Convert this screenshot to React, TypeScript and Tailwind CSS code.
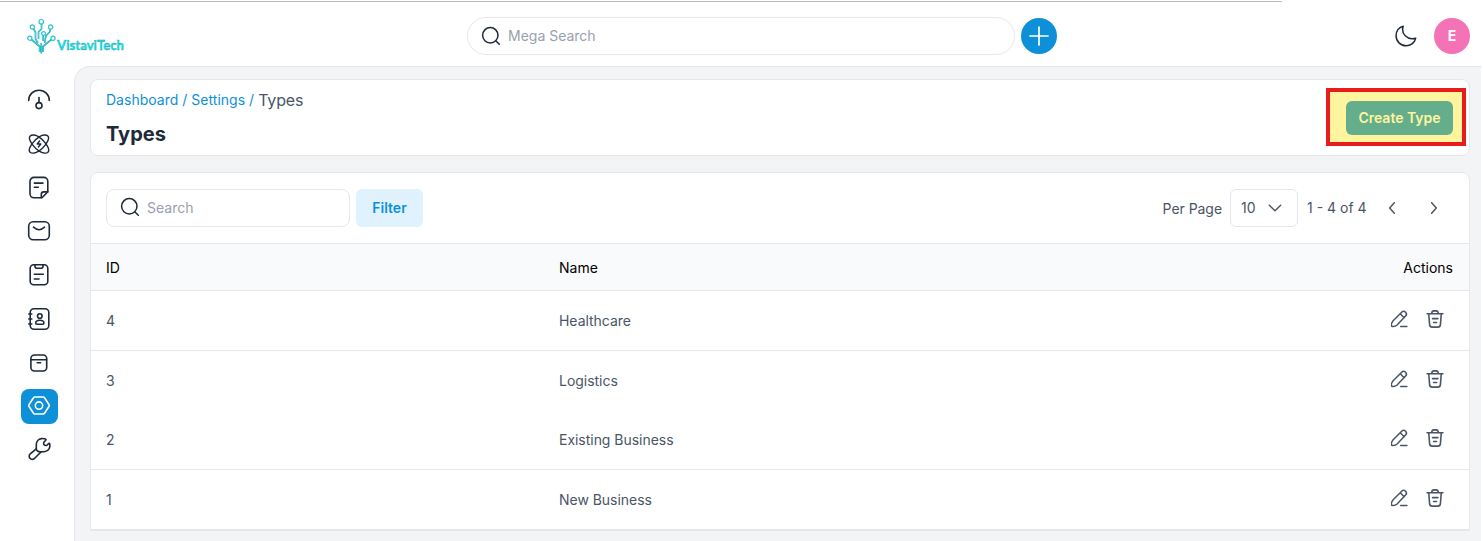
import React from "react";

type IconProps = { className?: string; children: React.ReactNode; box?: string; sw?: number };

function Icon({ className = "size-6", children, box = "0 0 24 24", sw = 1.6 }: IconProps) {
  return (
    <svg
      viewBox={box}
      className={`shrink-0 ${className}`}
      fill="none"
      stroke="currentColor"
      strokeWidth={sw}
      strokeLinecap="round"
      strokeLinejoin="round"
    >
      {children}
    </svg>
  );
}

const sidebar: { name: string; active?: boolean; art: React.ReactNode }[] = [
  {
    name: "dashboard",
    art: (
      <>
        <path d="M1.700 12.500C1.700 6.500 6.300 2.300 12 2.300s10.300 4.200 10.300 10.200" />
        <path d="M12 9.500v5" />
        <circle cx="12" cy="17.600" r="3" />
      </>
    ),
  },
  {
    name: "leads",
    art: (
      <g strokeWidth="1.400">
        <path d="M3.200 4C5 2.200 9 3 11.800 4.900c2 1.300 4.600 3.600 6.400 6 2.800 3.600 4.500 7.600 2.700 9.300-1.700 1.600-5.700.8-8.700-1.100-2-1.300-4.600-3.600-6.400-6C3 9.400 1.500 5.700 3.200 4z" />
        <path d="M20.800 4C19 2.200 15 3 12.200 4.900c-2 1.300-4.600 3.600-6.400 6-2.800 3.600-4.500 7.600-2.700 9.300 1.700 1.600 5.700.8 8.700-1.100 2-1.300 4.600-3.600 6.400-6 2.800-3.700 4.300-7.400 2.600-9.100z" />
        <path d="M12.600 9 10.200 12h3.600l-2.400 3" />
      </g>
    ),
  },
  {
    name: "quotes",
    art: (
      <>
        <path d="M15 21.800H7a4 4 0 0 1-4-4V5.400a4 4 0 0 1 4-4h9.800a4 4 0 0 1 4 4V15.800z" />
        <path d="M14.300 21.600v-3.200a2.500 2.500 0 0 1 2.500-2.500h4" />
        <path d="M7.300 7.100h8.700M7.300 11.300h4" />
      </>
    ),
  },
  {
    name: "mail",
    art: (
      <>
        <rect x="1.700" y="2.700" width="20.600" height="18" rx="4.500" />
        <path d="M6.500 8.200c3.500 3.200 7.500 3.200 11 0" />
      </>
    ),
  },
  {
    name: "activities",
    art: (
      <>
        <rect x="3.200" y="1.800" width="17.600" height="20" rx="3.500" />
        <path d="M8 2v1.300a2 2 0 0 0 2 2h4a2 2 0 0 0 2-2V2M7.300 11.200h9M7.300 16h4.700" />
      </>
    ),
  },
  {
    name: "contacts",
    art: (
      <>
        <rect x="3.200" y="1.800" width="18.600" height="20.400" rx="3.800" />
        <path d="M1.800 7h3M1.800 12h3M1.800 17h3" />
        <circle cx="12.800" cy="9" r="2.300" />
        <path d="M8.700 16c0-1.700 1.500-2.700 4.100-2.700s4.100 1 4.100 2.700c0 .8-.4 1.200-1.200 1.200H9.900c-.8 0-1.200-.4-1.200-1.200z" />
      </>
    ),
  },
  {
    name: "products",
    art: (
      <>
        <rect x="3.900" y="4" width="15.800" height="16" rx="3.500" />
        <path d="M4 8.700h15.500M10.200 11.700h3.400" />
      </>
    ),
  },
  {
    name: "settings",
    active: true,
    art: (
      <>
        <path d="M7.700 3h8.600c.5 0 .9.200 1.200.7l4.600 7.100c.3.500.3.900 0 1.400l-4.600 7.100c-.3.500-.7.700-1.200.7H7.700c-.5 0-.9-.2-1.200-.7l-4.600-7.100c-.3-.5-.3-.9 0-1.400l4.600-7.100c.3-.5.7-.7 1.200-.7z" />
        <circle cx="12" cy="11.600" r="3.700" />
      </>
    ),
  },
  {
    name: "configuration",
    art: (
      <>
        <path d="M9.300 11.800V7.500c0-3 2.200-5.500 5.200-5.900 1.400-.2 2.800-.1 4.100.5.500.3.500.7.100 1.100l-1.800 2c-.7 2.200.4 3.600 2.700 3.300l2-1.900c.4-.4.900-.3 1.100.3.700 3.600-.9 7.100-4.500 7.600-1.200.2-2.500.2-4 .2l-6.500 6.600a3 3 0 0 1-4.700-.1 3 3 0 0 1 .2-4.300z" />
        <path d="m9.300 11.800c.4 2.200 2.200 3.400 4.900 2.900" />
      </>
    ),
  },
];

const rows = [
  { id: 4, name: "Healthcare", size: "h-[60px] border-b" },
  { id: 3, name: "Logistics", size: "h-[60px]" },
  { id: 2, name: "Existing Business", size: "h-[59px] border-b" },
  { id: 1, name: "New Business", size: "h-[60px] border-b" },
];

function SearchIcon({ className }: { className?: string }) {
  return (
    <Icon className={className} box="0 0 20 20" sw={1.5}>
      <circle cx="9.300" cy="9.300" r="7.700" />
      <path d="m15 15 3.300 3.300" />
    </Icon>
  );
}

const traces =
  "M14.300 36.500V26M12.600 35V29.500L4.500 22.500M16 35V29.500l8.300-7M11 26 8.500 22V15L6.300 11.500M17.500 26l1.500-7 4-4.500V11.500M11.500 22v-7l3-3V7M16.200 24v-6";

function Logo() {
  return (
    <svg className="h-10 w-[100px]" viewBox="0 0 100 40" fill="none">
      <path d={traces} stroke="#4ba3a8" strokeWidth="1.700" />
      <path d={traces} stroke="#1fdfe6" strokeWidth=".9" />
      <g stroke="#2fc6cc" strokeWidth="1.200" fill="#fff">
        <circle cx="14.300" cy="4.800" r="2.300" />
        <circle cx="5.300" cy="10" r="2.100" />
        <circle cx="23.600" cy="10" r="2.100" />
        <circle cx="16.500" cy="16.500" r="1.900" />
        <circle cx="2.800" cy="21.200" r="2.100" />
        <circle cx="26" cy="21.200" r="2.100" />
      </g>
      <text
        x="30"
        y="33"
        textLength="67"
        lengthAdjust="spacingAndGlyphs"
        fontFamily="Lato, sans-serif"
        fontSize="14"
        fontWeight="700"
        fill="#08eef6"
        stroke="#3b8f96"
        strokeWidth=".35"
      >
        VistaviTech
      </text>
    </svg>
  );
}

export default function App() {
  return (
    <div className="flex h-[541px] w-[1483px] flex-col overflow-hidden bg-white font-['Inter',sans-serif] text-sm text-gray-600">
      <div className="mt-px h-px w-[1282px] shrink-0 bg-[#b9b9b9]" />
      <header className="flex h-16 shrink-0 items-center pr-[13px] pl-[27px]">
        <div className="w-[440px] pt-[5px]">
          <Logo />
        </div>
        <div className="mt-1 flex h-[38px] w-[548px] items-center gap-[7px] rounded-full border border-gray-200 pl-[13px]">
          <SearchIcon className="size-5 text-gray-800" />
          <span className="text-gray-400">Mega Search</span>
        </div>
        <button className="mt-1 ml-[5.5px] flex size-9 items-center justify-center rounded-full bg-[#0e90d9] text-white">
          <Icon className="size-6" sw={1.7}>
            <path d="M12 3v18M3 12h18" />
          </Icon>
        </button>
        <div className="mt-1 ml-auto flex items-center gap-4">
          <Icon className="size-6 text-gray-800" sw={1.5}>
            <path d="M9.200 2.200C5 3.200 2.100 7 2.100 11.700c0 5.700 4.400 10.100 9.900 10.100 4.800 0 8.800-3.100 9.700-7.600-1.300.4-2.500.6-3.800.5-5.300-.4-9.400-4.500-9.300-9.300 0-1.200.2-2.200.6-3.200z" />
          </Icon>
          <div className="flex size-9 items-center justify-center rounded-full bg-[#f472b6] font-bold text-white">E</div>
        </div>
      </header>

      <div className="flex min-h-0 flex-1">
        <nav className="flex w-[74px] shrink-0 flex-col items-center gap-[8.75px] pt-[16.500px] pl-1">
          {sidebar.map((item) => (
            <a
              key={item.name}
              className={
                item.active
                  ? "-mb-px flex h-[35px] w-[37px] shrink-0 items-center justify-center rounded-lg bg-[#0e90d9] text-white"
                  : "flex h-[35px] w-[37px] shrink-0 items-center justify-center text-gray-800"
              }
            >
              <Icon>{item.art}</Icon>
            </a>
          ))}
        </nav>

        <main className="mr-[2px] flex flex-1 flex-col gap-4 rounded-tl-2xl border-t border-l border-gray-200 bg-gray-100 pt-3 pr-[11px] pl-[15px]">
          <section className="flex h-[77px] shrink-0 items-center justify-between rounded-lg border border-gray-200 bg-white pl-[15px]">
            <div className="pt-[3px]">
              <div className="flex h-5 items-center gap-1">
                <span className="tracking-[0.02px] text-[#0e90d9]">Dashboard / Settings /</span>
                <span className="text-base tracking-[-0.15px]">Types</span>
              </div>
              <h1 className="mt-[10px] text-xl leading-7 font-bold text-gray-800">Types</h1>
            </div>
            <div className="mr-[3px] mb-px flex h-[58px] w-[140px] items-center justify-end border-4 border-[#e81c1c] bg-[#fff59f] pt-px pr-[9px]">
              <button className="h-[34px] w-[107px] rounded-md bg-[#64ae8c] font-semibold text-[#fff59f]">Create Type</button>
            </div>
          </section>

          <section className="flex shrink-0 flex-col rounded-t-lg border border-gray-200 bg-white">
            <div className="flex h-[70px] items-center pr-[15px] pl-[15px]">
              <div className="flex h-[38px] w-[244px] items-center gap-[7px] rounded-lg border border-gray-200 pl-[13px]">
                <SearchIcon className="mb-[2px] size-5 text-gray-800" />
                <span className="text-gray-400">Search</span>
              </div>
              <button className="ml-[6px] h-[38px] w-[67px] rounded-md bg-[#e0f2fe] font-semibold text-[#0e90d9]">Filter</button>
              <div className="ml-auto flex items-center">
                <span className="mr-2 pt-px tracking-[-0.05px]">Per Page</span>
                <div className="flex h-[38px] w-[68px] items-center justify-between rounded-md border border-gray-200 pr-[14px] pl-[10px]">
                  10
                  <Icon className="size-4" sw={2.2}>
                    <path d="m3.500 8 8.500 8 8.500-8" />
                  </Icon>
                </div>
                <span className="ml-[9px] w-[60px] whitespace-nowrap">1 - 4 of 4</span>
                <Icon className="ml-[17px] size-4" sw={2.2}>
                  <path d="m15.500 4-7 8 7 8" />
                </Icon>
                <Icon className="mr-[12px] ml-[26px] size-4" sw={2.2}>
                  <path d="m8.500 4 7 8-7 8" />
                </Icon>
              </div>
            </div>
            <div className="grid h-12 grid-cols-[453px_1fr_auto] items-center border-y border-gray-200 bg-gray-50 pt-[2px] pr-[16px] pl-[15px] text-black">
              <span>ID</span>
              <span>Name</span>
              <span>Actions</span>
            </div>
            {rows.map((row) => (
              <div key={row.id} className={`grid grid-cols-[453px_1fr_auto] items-center border-gray-200 pr-[16px] pl-[15px] ${row.size}`}>
                <span>{row.id}</span>
                <span className="tracking-[-0.03px]">{row.name}</span>
                <div className="mr-2 mb-1 flex gap-4">
                  <Icon className="size-5" sw={1.8}>
                    <path d="M3.200 20.700c-.7-2 0-4.500 1.500-6.200L15.200 3.800c1.500-1.500 3.400-1.300 4.700 0s1.400 3.200 0 4.700L9.700 19.200c-1.700 1.500-4.200 2-6.500 1.500zM13.500 5.700l4.700 4.700M14 21h7.500" />
                  </Icon>
                  <Icon className="size-5" sw={1.9}>
                    <path d="M2.500 5.600h19M4.500 6l1 12.700c.2 2 1.300 3 3.200 3h6.600c1.900 0 3-1 3.200-3L19.500 6M8 5.500c.2-2.200 1-3.300 2.700-3.300h2.600c1.700 0 2.500 1.100 2.700 3.300M9 11.500h6.500M10.300 16.200h3.600" />
                  </Icon>
                </div>
              </div>
            ))}
          </section>
        </main>
      </div>
    </div>
  );
}
